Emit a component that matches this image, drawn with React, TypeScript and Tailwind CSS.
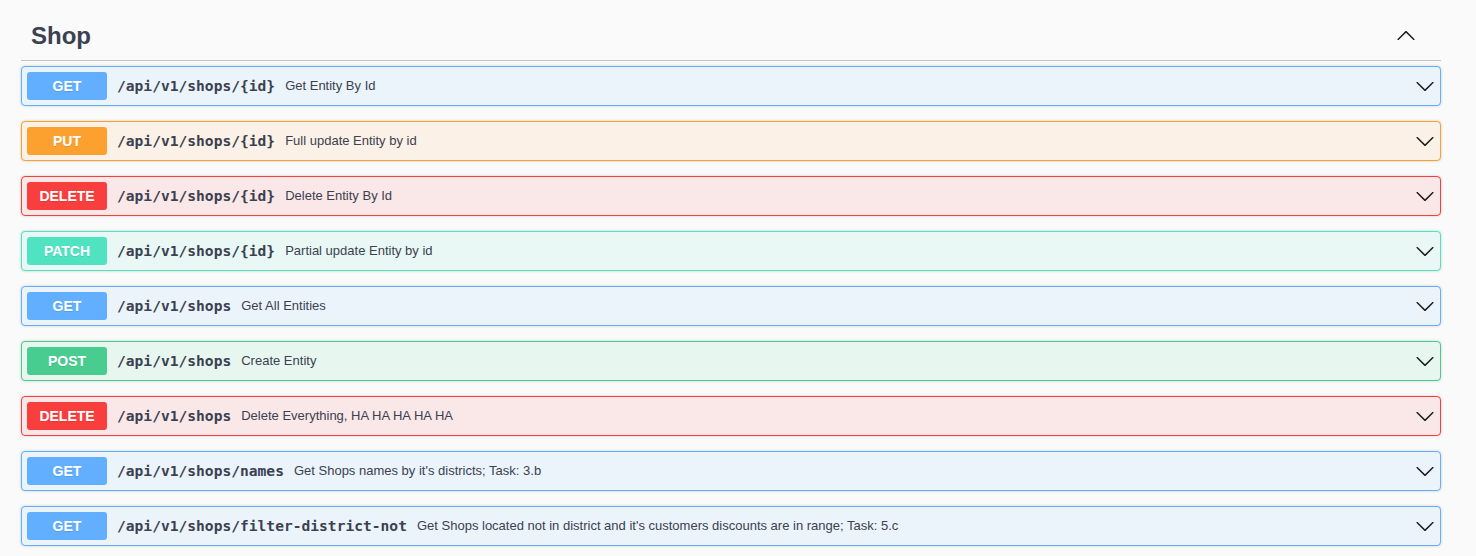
import React from 'react';

type Method = 'GET' | 'PUT' | 'DELETE' | 'PATCH' | 'POST';

interface Operation {
  method: Method;
  path: string;
  summary: string;
}

const methodStyles: Record<Method, { block: string; badge: string }> = {
  GET: { block: 'bg-[#ebf3fb] border-[#61affe]', badge: 'bg-[#61affe]' },
  PUT: { block: 'bg-[#fbf1e6] border-[#fca130]', badge: 'bg-[#fca130]' },
  DELETE: { block: 'bg-[#fae7e7] border-[#f93e3e]', badge: 'bg-[#f93e3e]' },
  PATCH: { block: 'bg-[#e9f8f5] border-[#50e3c2]', badge: 'bg-[#50e3c2]' },
  POST: { block: 'bg-[#e8f6f0] border-[#49cc90]', badge: 'bg-[#49cc90]' },
};

const operations: Operation[] = [
  { method: 'GET', path: '/api/v1/shops/{id}', summary: 'Get Entity By Id' },
  { method: 'PUT', path: '/api/v1/shops/{id}', summary: 'Full update Entity by id' },
  { method: 'DELETE', path: '/api/v1/shops/{id}', summary: 'Delete Entity By Id' },
  { method: 'PATCH', path: '/api/v1/shops/{id}', summary: 'Partial update Entity by id' },
  { method: 'GET', path: '/api/v1/shops', summary: 'Get All Entities' },
  { method: 'POST', path: '/api/v1/shops', summary: 'Create Entity' },
  { method: 'DELETE', path: '/api/v1/shops', summary: 'Delete Everything, HA HA HA HA HA' },
  { method: 'GET', path: '/api/v1/shops/names', summary: "Get Shops names by it's districts; Task: 3.b" },
  {
    method: 'GET',
    path: '/api/v1/shops/filter-district-not',
    summary: "Get Shops located not in district and it's customers discounts are in range; Task: 5.c",
  },
];

// swagger-ui style arrow, points down by default
const Arrow: React.FC<{ up?: boolean }> = ({ up = false }) => (
  <svg
    width="20"
    height="20"
    viewBox="0 0 20 20"
    className={`shrink-0 fill-[#1b1b1b] ${up ? 'rotate-180' : ''}`}
    aria-hidden="true"
  >
    <path d="M17.418 6.109c.272-.268.709-.268.979 0s.271.701 0 .969l-7.908 7.83c-.27.268-.707.268-.979 0l-7.908-7.83c-.27-.268-.27-.701 0-.969.271-.268.709-.268.979 0L10 13.25l7.418-7.141z" />
  </svg>
);

const OperationRow: React.FC<{ op: Operation }> = ({ op }) => {
  const styles = methodStyles[op.method];
  return (
    <div
      className={`mb-[15px] rounded-[4px] border shadow-[0_0_3px_rgba(0,0,0,0.19)] ${styles.block}`}
    >
      <div className="flex h-[38px] items-center p-[5px]">
        <span
          className={`flex h-[28px] w-[80px] shrink-0 items-center justify-center rounded-[3px] text-[14px] font-bold text-white [text-shadow:0_1px_0_rgba(0,0,0,0.1)] ${styles.badge}`}
        >
          {op.method}
        </span>
        <span className="px-[10px] font-['DejaVu_Sans_Mono',monospace] text-[14.6px] font-bold text-[#3b4151]">
          {op.path}
        </span>
        <span className="text-[13px] text-[#3b4151]">{op.summary}</span>
        <div className="ml-auto">
          <Arrow />
        </div>
      </div>
    </div>
  );
};

export default function App() {
  return (
    <div className="min-h-[556px] w-[1476px] overflow-hidden bg-[#fafafa] font-['Liberation_Sans',Arial,sans-serif]">
      <div className="w-[1462px] pl-[21px] pr-[21px] pt-[11px]">
        <h3 className="mb-[5px] flex h-[50px] items-center border-b border-[rgba(59,65,81,0.3)] pl-[10px] pr-[25px] text-[24px] font-bold text-[#3b4151]">
          <span>Shop</span>
          <div className="ml-auto">
            <Arrow up />
          </div>
        </h3>
        <div>
          {operations.map((op, i) => (
            <OperationRow key={i} op={op} />
          ))}
        </div>
      </div>
    </div>
  );
}
